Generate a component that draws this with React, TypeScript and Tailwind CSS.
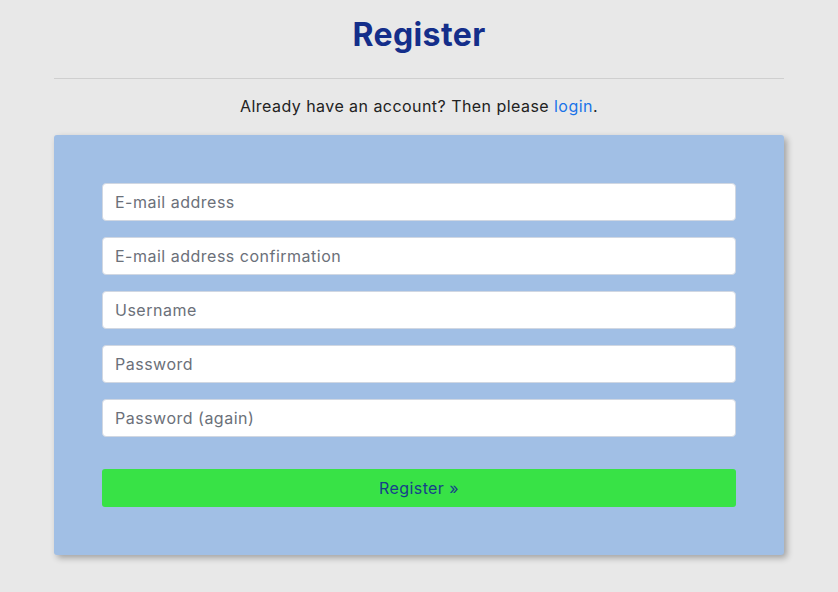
import React from "react";

const fields = [
  "E-mail address",
  "E-mail address confirmation",
  "Username",
  "Password",
  "Password (again)",
];

export default function App() {
  return (
    <div
      className="min-h-[592px] w-full bg-[#e8e8e8] flex flex-col items-center"
      style={{ fontFamily: "Inter, 'Noto Sans', sans-serif" }}
    >
      <div className="w-[730px] flex flex-col items-center">
        <h1 className="mt-[13px] h-[44px] text-[32px] leading-[44px] font-bold tracking-[0.4px] text-[#142e8a]">
          Register
        </h1>
        <div className="mt-[21px] w-full h-px bg-[#cfcfcf]" />
        <p className="mt-[15px] text-[16px] leading-[24px] tracking-[0.45px] text-[#222]">
          Already have an account? Then please{" "}
          <a href="#" className="text-[#1a73e8]">
            login
          </a>
          .
        </p>
        <div className="mt-[17px] w-full bg-[#a1bfe5] rounded-[3px] shadow-[3px_3px_6px_rgba(0,0,0,0.3)] p-[48px] flex flex-col">
          <div className="flex flex-col gap-[16px]">
            {fields.map((f) => (
              <input
                key={f}
                type="text"
                placeholder={f}
                className="h-[38px] w-full bg-white border border-[#d0d7e2] rounded-[4px] px-[12px] text-[16px] tracking-[0.5px] text-[#333] placeholder:text-[#6b7079] outline-none"
              />
            ))}
          </div>
          <button className="mt-[32px] h-[38px] w-full bg-[#38e246] rounded-[3px] text-[16px] tracking-[0.4px] text-[#16408a]">
            Register »
          </button>
        </div>
      </div>
    </div>
  );
}
